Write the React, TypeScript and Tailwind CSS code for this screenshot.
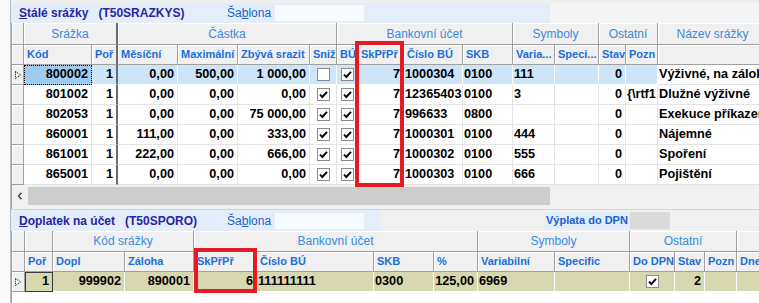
import * as React from "react";

type Col = { w: string; a: "l" | "r" | "c"; h: string; thick?: boolean };
type Group = { w: string; t: string; thick?: boolean };
type Val = string | boolean;

const align = {
  l: "justify-start pl-[1px]",
  r: "justify-end pr-[3px]",
  c: "justify-center",
};

const topGroups: Group[] = [
  { w: "w-[13px]", t: "" },
  { w: "w-[94px]", t: "Srážka", thick: true },
  { w: "w-[219px]", t: "Částka" },
  { w: "w-[176px]", t: "Bankovní účet" },
  { w: "w-[86px]", t: "Symboly" },
  { w: "w-[59px]", t: "Ostatní" },
  { w: "w-[110px]", t: "Název srážky" },
];

const topCols: Col[] = [
  { w: "w-[68px]", a: "r", h: "Kód" },
  { w: "w-[26px]", a: "r", h: "Poř", thick: true },
  { w: "w-[60px]", a: "r", h: "Měsíční" },
  { w: "w-[60px]", a: "r", h: "Maximální" },
  { w: "w-[72px]", a: "r", h: "Zbývá srazit" },
  { w: "w-[27px]", a: "c", h: "Sniž" },
  { w: "w-[21px]", a: "c", h: "BÚ" },
  { w: "w-[46px]", a: "r", h: "SkPřPř" },
  { w: "w-[59px]", a: "l", h: "Číslo BÚ" },
  { w: "w-[50px]", a: "l", h: "SKB" },
  { w: "w-[42px]", a: "l", h: "Varia..." },
  { w: "w-[44px]", a: "l", h: "Speci..." },
  { w: "w-[27px]", a: "r", h: "Stav" },
  { w: "w-[32px]", a: "l", h: "Pozn" },
  { w: "w-[110px]", a: "l", h: "" },
];

const topRows: Val[][] = [
  ["800002", "1", "0,00", "500,00", "1 000,00", false, true, "7", "1000304", "0100", "111", "", "0", "", "Výživné, na zálohu"],
  ["801002", "1", "0,00", "0,00", "0,00", true, true, "7", "12365403", "0100", "3", "", "0", "{\\rtf1", "Dlužné výživné"],
  ["802053", "1", "0,00", "0,00", "75 000,00", true, true, "7", "996633", "0800", "", "", "0", "", "Exekuce příkazem"],
  ["860001", "1", "111,00", "0,00", "333,00", true, true, "7", "1000301", "0100", "444", "", "0", "", "Nájemné"],
  ["861001", "1", "222,00", "0,00", "666,00", true, true, "7", "1000302", "0100", "555", "", "0", "", "Spoření"],
  ["865001", "1", "0,00", "0,00", "0,00", true, true, "7", "1000303", "0100", "666", "", "0", "", "Pojištění"],
];

const botGroups: Group[] = [
  { w: "w-[14px]", t: "" },
  { w: "w-[28px]", t: "" },
  { w: "w-[141px]", t: "Kód srážky" },
  { w: "w-[284px]", t: "Bankovní účet" },
  { w: "w-[152px]", t: "Symboly" },
  { w: "w-[107px]", t: "Ostatní" },
  { w: "w-[40px]", t: "" },
];

const botCols: Col[] = [
  { w: "w-[28px]", a: "r", h: "Poř" },
  { w: "w-[72px]", a: "r", h: "Dopl" },
  { w: "w-[69px]", a: "r", h: "Záloha" },
  { w: "w-[63px]", a: "r", h: "SkPřPř" },
  { w: "w-[117px]", a: "l", h: "Číslo BÚ" },
  { w: "w-[60px]", a: "l", h: "SKB" },
  { w: "w-[44px]", a: "r", h: "%" },
  { w: "w-[77px]", a: "l", h: "Variabilní" },
  { w: "w-[75px]", a: "l", h: "Specific" },
  { w: "w-[45px]", a: "c", h: "Do DPN" },
  { w: "w-[30px]", a: "r", h: "Stav" },
  { w: "w-[32px]", a: "l", h: "Pozn" },
  { w: "w-[40px]", a: "l", h: "Dne" },
];

const botRow: Val[] = ["1", "999902", "890001", "6", "111111111", "0300", "125,00", "6969", "", true, "2", "", ""];

function Check({ on }: { on: boolean }) {
  return (
    <span className="w-[13px] h-[13px] border border-[#8c8c8c] bg-white flex items-center justify-center">
      {on && (
        <svg width="9" height="9" viewBox="0 0 9 9">
          <path d="M1 4.6 L3.3 7 L8 1.8" stroke="#000" strokeWidth="1.9" fill="none" />
        </svg>
      )}
    </span>
  );
}

function Pointer() {
  return (
    <svg width="8" height="10" viewBox="0 0 8 10">
      <path d="M1.5 1.5 L6.5 5 L1.5 8.5 Z" fill="#fff" stroke="#000" strokeWidth="1" strokeDasharray="1 1" />
    </svg>
  );
}

function GroupRow({ groups, h }: { groups: Group[]; h: string }) {
  return (
    <div className={`flex ${h}`}>
      {groups.map((g, i) => (
        <div
          key={i}
          className={`${g.w} shrink-0 h-full flex items-center justify-center bg-[#f0f0f0] border-r border-b border-[#a0a0a0] shadow-[inset_1px_1px_0_#ffffff] text-[12px] text-[#3a8ae2] whitespace-nowrap overflow-hidden ${i === 0 ? "border-l" : ""} ${g.thick ? "border-r-2 border-r-[#6b6b6b]" : ""}`}
        >
          {g.t}
        </div>
      ))}
    </div>
  );
}

function HeadRow({ cols, sel }: { cols: Col[]; sel: string }) {
  return (
    <div className="flex h-[20px]">
      <div className={`${sel} shrink-0 h-full bg-[#f0f0f0] border-l border-r border-b border-[#a0a0a0] shadow-[inset_1px_1px_0_#ffffff]`} />
      {cols.map((c, i) => (
        <div
          key={i}
          className={`${c.w} shrink-0 h-full flex items-center pl-[3px] bg-[#f0f0f0] border-r border-b border-[#a0a0a0] shadow-[inset_1px_1px_0_#ffffff] text-[11px] font-bold text-[#1c6edb] whitespace-nowrap overflow-hidden ${c.thick ? "border-r-2 border-r-[#6b6b6b]" : ""}`}
        >
          {c.h}
        </div>
      ))}
    </div>
  );
}

function DataRow({
  cols,
  vals,
  sel,
  pointer,
  tone,
}: {
  cols: Col[];
  vals: Val[];
  sel: string;
  pointer?: boolean;
  tone: "plain" | "blue" | "olive";
}) {
  return (
    <div className="flex h-[20px]">
      <div className={`${sel} shrink-0 h-full flex items-center pl-[2px] bg-[#f0f0f0] border-l border-r border-b border-[#a0a0a0] shadow-[inset_1px_1px_0_#ffffff]`}>
        {pointer && <Pointer />}
      </div>
      {cols.map((c, i) => {
        const v = vals[i];
        let bg = "bg-white border-[#e4e4e4]";
        if (tone === "blue") {
          bg = i === 0 ? "bg-[#9dcbf1] border border-dotted border-black" : i === cols.length - 1 ? "bg-white border-[#e4e4e4]" : "bg-[#cde5f8] border-white";
        }
        if (tone === "olive") {
          bg = i === 0 ? "bg-[#d8d8b0] border border-[#3a3a3a]" : "bg-[#d8d8b0] border-white";
        }
        return (
          <div
            key={i}
            className={`${c.w} shrink-0 h-full flex items-center ${align[c.a]} border-r border-b ${bg} text-[12.7px] font-bold text-black whitespace-nowrap overflow-hidden ${c.thick ? "border-r-2 border-r-[#6b6b6b]" : ""}`}
          >
            {typeof v === "boolean" ? <Check on={v} /> : v}
          </div>
        );
      })}
    </div>
  );
}

function Title({ first, rest, code }: { first: string; rest: string; code: string }) {
  return (
    <>
      <span className="w-[216px] shrink-0 pl-[8px] font-bold text-[12px] text-[#2626a4] whitespace-nowrap">
        <span className="underline">{first}</span>
        {rest}
        <span className="ml-[10px]">{code}</span>
      </span>
      <span className="w-[48px] shrink-0 text-[12px] text-[#1a5fcc]">
        Ša<span className="underline">b</span>lona
      </span>
      <span className="w-[89px] h-[16px] shrink-0 bg-[#f7fbff]" />
    </>
  );
}

export default function App() {
  return (
    <div className="relative w-[759px] h-[303px] overflow-hidden flex bg-white font-['Liberation_Sans',Arial,sans-serif]">
      <div className="w-[11px] shrink-0 bg-[#f9f9f9] border-r border-[#b4bcc6]" />

      <div className="flex-1 min-w-0 flex flex-col">
        <div className="h-[3px] bg-[#f0f0f0]" />

        <div className="flex h-[20px]">
          <div className="w-[539px] shrink-0 flex items-center bg-[#e4eefa]">
            <Title first="S" rest="tálé srážky" code="(T50SRAZKYS)" />
          </div>
          <div className="flex-1 bg-[#f3f5f7]" />
        </div>

        <GroupRow groups={topGroups} h="h-[22px]" />
        <HeadRow cols={topCols} sel="w-[13px]" />
        {topRows.map((r, i) => (
          <DataRow key={i} cols={topCols} vals={r} sel="w-[13px]" pointer={i === 0} tone={i === 0 ? "blue" : "plain"} />
        ))}

        <div className="h-[24px] bg-[#f0f0f0] pt-[2px] border-l border-[#a0a0a0]">
          <div className="flex h-[18px]">
            <div className="w-[16px] shrink-0 flex items-center justify-center bg-[#f0f0f0]">
              <svg width="6" height="8" viewBox="0 0 6 8">
                <path d="M4.5 0.8 L1.5 4 L4.5 7.2" stroke="#404040" strokeWidth="1.4" fill="none" />
              </svg>
            </div>
            <div className="w-[522px] shrink-0 bg-[#cdcdcd]" />
            <div className="flex-1 bg-[#f0f0f0]" />
          </div>
        </div>

        <div className="flex h-[22px] border-t border-[#c4d8ee]">
          <div className="w-[369px] shrink-0 flex items-center bg-[#e4eefa]">
            <Title first="D" rest="oplatek na účet" code="(T50SPORO)" />
          </div>
          <div className="flex-1 flex items-center bg-[#f0f0f0]">
            <span className="ml-[165px] w-[85px] h-[17px] shrink-0 flex items-center pl-[1px] bg-[#e2edfa] text-[11px] font-bold text-[#1a5fcc] whitespace-nowrap">
              Výplata do DPN
            </span>
            <span className="w-[40px] h-[17px] shrink-0 bg-[#dadada]" />
          </div>
        </div>

        <GroupRow groups={botGroups} h="h-[21px]" />
        <HeadRow cols={botCols} sel="w-[14px]" />
        <DataRow cols={botCols} vals={botRow} sel="w-[14px]" pointer tone="olive" />
        <div className="flex-1 bg-white border-l border-[#a0a0a0]" />
      </div>

      <div className="absolute left-[355px] top-[41px] w-[49px] h-[146px] border-4 border-[#e51b24]" />
      <div className="absolute left-[194px] top-[248px] w-[63px] h-[45px] border-4 border-[#e51b24]" />
    </div>
  );
}
